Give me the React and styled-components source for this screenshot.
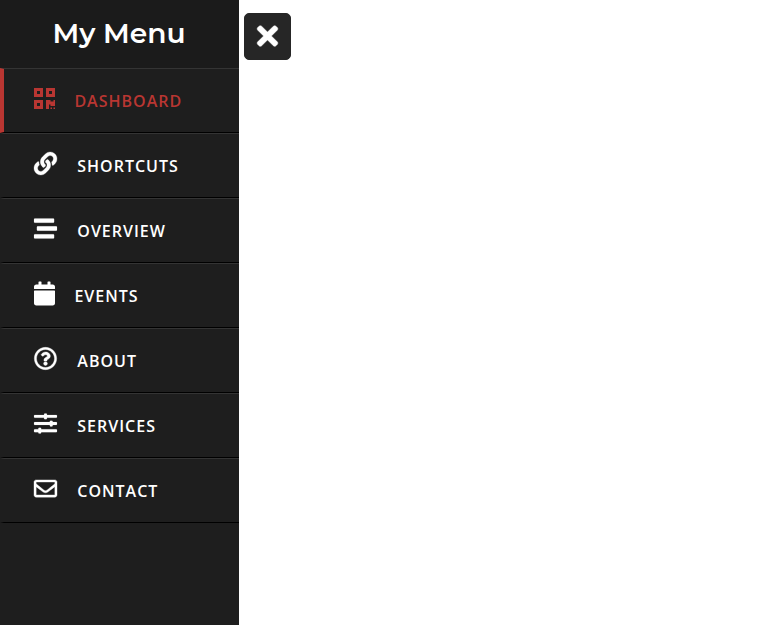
import React from "react";
import styled, { createGlobalStyle } from "styled-components";
import { FaQrcode, FaLink, FaStream, FaCalendar, FaRegQuestionCircle, FaSlidersH, FaRegEnvelope, FaTimes } from "react-icons/fa";

const GlobalStyle = createGlobalStyle`
  * { box-sizing: border-box; margin: 0; padding: 0; }
  body { background: #fff; font-family: "Open Sans", sans-serif; }
`;
const Page = styled.div`
  display: flex;
  align-items: flex-start;
  height: 100vh;
`;
const Sidebar = styled.aside`
  width: 239px;
  height: 100%;
  background: #1e1e1e;
`;
const Title = styled.header`
  height: 68px;
  padding-right: 1px;
  background: #1b1b1b;
  color: #fff;
  text-align: center;
  font: 600 28px/67px Montserrat, sans-serif;
`;
const Item = styled.a`
  display: flex;
  align-items: center;
  height: 65px;
  padding-left: 30px;
  border-top: 1px solid rgba(255, 255, 255, 0.1);
  border-bottom: 1px solid #000;
  border-left: 4px solid ${(p) => (p.$active ? "#b93632" : "transparent")};
  color: ${(p) => (p.$active ? "#b93632" : "#fff")};
  font-size: 16px;
  font-weight: 600;
  letter-spacing: 1px;
  text-transform: uppercase;
  text-decoration: none;
`;
const Icon = styled.span`
  display: flex;
  font-size: ${(p) => (p.$narrow ? 24 : 23)}px;
  margin: 0 ${(p) => (p.$narrow ? 19.4 : 20.3)}px 4px 0;

  svg {
    width: ${(p) => (p.$narrow ? "0.875em" : "1em")};
    overflow: visible;
    stroke-width: ${(p) => p.$stroke || 0}px;
    transform: ${(p) => (p.$narrow ? "translateY(-0.5px)" : "none")};
  }
`;
const CloseButton = styled.button`
  display: grid;
  place-items: center;
  width: 47px;
  height: 47px;
  margin: 13px 0 0 5px;
  padding: 0 0 1px;
  border: 1px solid #262626;
  border-radius: 5px;
  background: #262626;
  color: #fff;
  font-size: 30px;

  svg {
    overflow: visible;
    stroke-width: 8px;
    transform: translateX(-0.5px);
  }
`;
const items = [
  { label: "Dashboard", Glyph: FaQrcode, narrow: true, active: true },
  { label: "Shortcuts", Glyph: FaLink, stroke: 6 },
  { label: "Overview", Glyph: FaStream, stroke: 3 },
  { label: "Events", Glyph: FaCalendar, narrow: true },
  { label: "About", Glyph: FaRegQuestionCircle, stroke: 9 },
  { label: "Services", Glyph: FaSlidersH, stroke: 3 },
  { label: "Contact", Glyph: FaRegEnvelope, stroke: 8 },
];
export default function App() {
  return (
    <Page>
      <GlobalStyle />
      <Sidebar>
        <Title>My Menu</Title>
        <nav>
          {items.map(({ label, Glyph, narrow, active, stroke }) => (
            <Item key={label} $active={active}>
              <Icon $narrow={narrow} $stroke={stroke}><Glyph /></Icon>
              {label}
            </Item>
          ))}
        </nav>
      </Sidebar>
      <CloseButton aria-label="Close menu"><FaTimes /></CloseButton>
    </Page>
  );
}
